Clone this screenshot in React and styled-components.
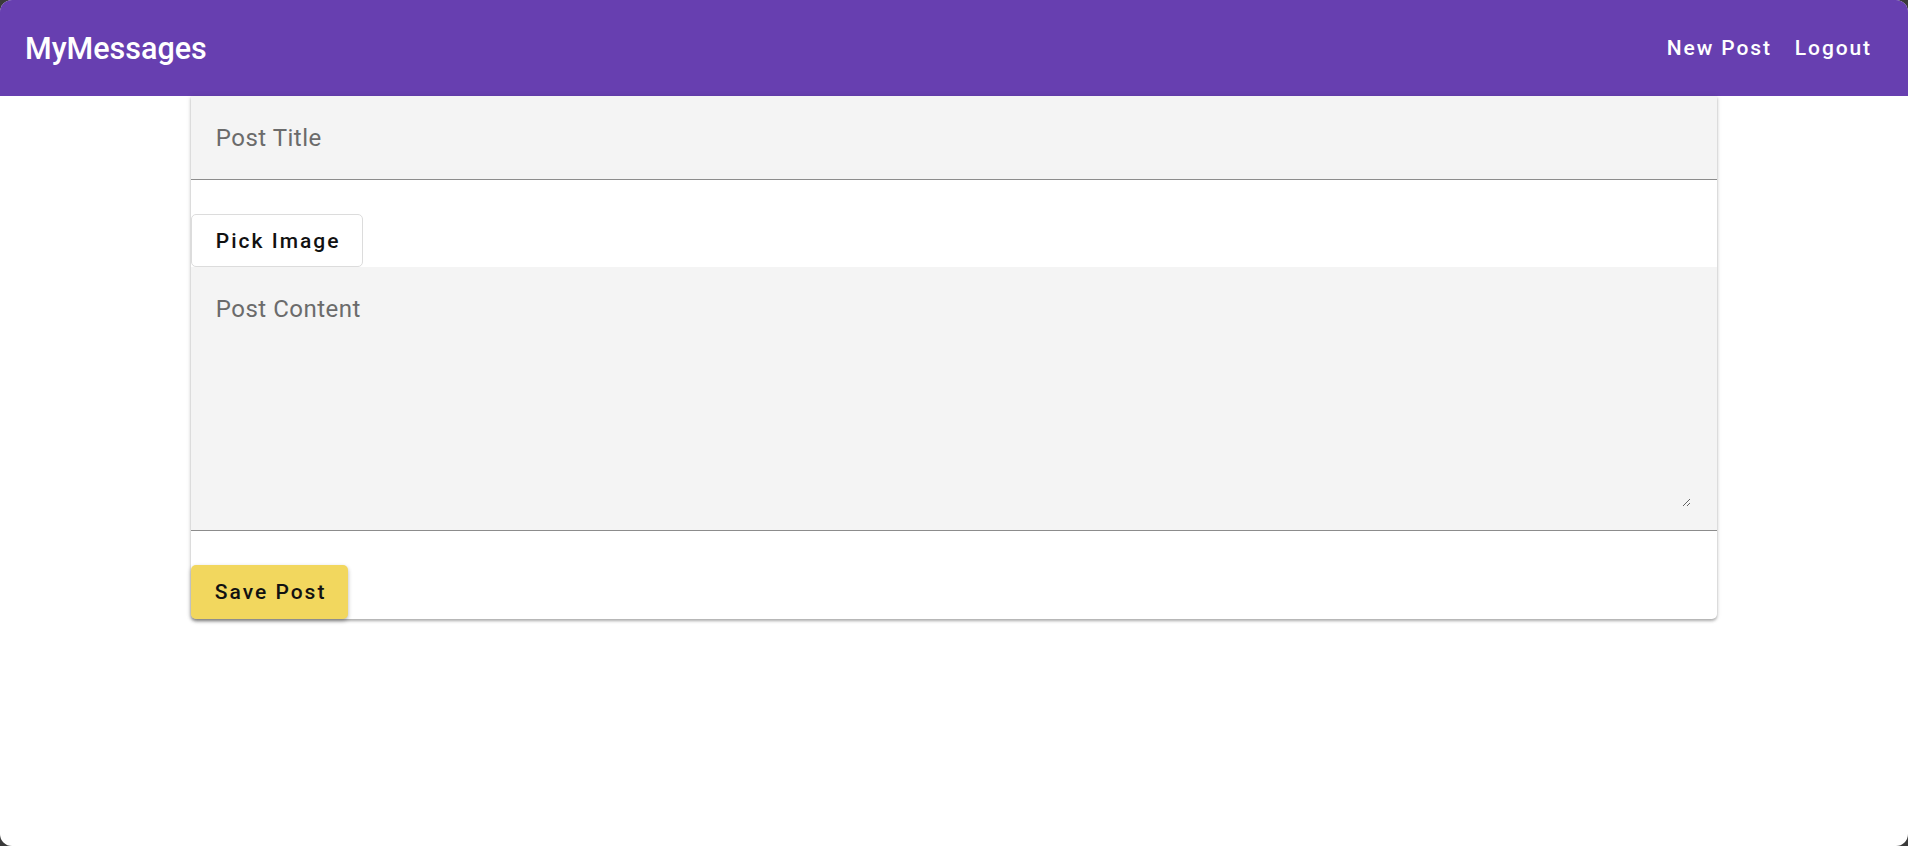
import React from "react";
import styled, { createGlobalStyle } from "styled-components";

const Global = createGlobalStyle`
  html, body { margin: 0; padding: 0; background: #3a3a3a; }
  body { font-family: Roboto, "Noto Sans", sans-serif; }
  * { box-sizing: border-box; }
`;

const Window = styled.div`
  height: 846px;
  background: #ffffff;
  border-radius: 12px;
  overflow: hidden;
`;

const Header = styled.header`
  height: 96px;
  background: #673fb0;
  display: flex;
  align-items: center;
  justify-content: space-between;
  padding: 0 24px 0 25px;
`;

const Logo = styled.div`
  color: #ffffff;
  font-size: 30.5px;
  font-weight: 500;
`;

const Nav = styled.nav`
  display: flex;
  gap: 23px;
  padding-right: 12px;
`;

const NavLink = styled.a`
  color: #ffffff;
  font-size: 21px;
  font-weight: 500;
  letter-spacing: 1.9px;
  text-decoration: none;
`;

const Card = styled.form`
  width: 80%;
  margin: 0 auto;
  display: flex;
  flex-direction: column;
  align-items: flex-start;
  border-radius: 0 0 5px 5px;
  box-shadow: 0 2px 3px rgba(0, 0, 0, 0.3), 0 0 6px rgba(0, 0, 0, 0.08);
`;

const TitleInput = styled.input`
  width: 100%;
  height: 84px;
  background: #f4f4f4;
  border: none;
  border-bottom: 1px solid #8c8c8c;
  padding: 0 25px;
  font-family: Roboto, sans-serif;
  font-size: 24px;
  letter-spacing: 0.5px;
  color: #333;
  outline: none;
  &::placeholder { color: #6b6b6b; }
`;

const Button = styled.button`
  height: ${(p) => p.$h || 53}px;
  padding: 0 22px 0 24px;
  margin-top: 34px;
  font-family: Roboto, sans-serif;
  font-size: 21px;
  font-weight: 500;
  letter-spacing: 2px;
  color: #111;
  border-radius: 5px;
  border: ${(p) => (p.$primary ? "none" : "1px solid #dcdcdc")};
  background: ${(p) => (p.$primary ? "#f2d75e" : "#ffffff")};
  box-shadow: ${(p) => (p.$primary ? "0 2px 4px rgba(0,0,0,0.3)" : "none")};
  cursor: pointer;
`;

const ContentWrap = styled.div`
  width: 100%;
  background: #f4f4f4;
  border-bottom: 1px solid #8c8c8c;
  padding: 28px 26px 23px 25px;
  display: flex;
`;

const ContentArea = styled.textarea`
  width: 100%;
  height: 212px;
  background: transparent;
  border: none;
  outline: none;
  padding: 0;
  resize: vertical;
  font-family: Roboto, sans-serif;
  font-size: 24px;
  letter-spacing: 0.5px;
  color: #333;
  &::placeholder { color: #6b6b6b; }
`;

export default function App() {
  return (
    <>
      <Global />
      <Window>
        <Header>
          <Logo>MyMessages</Logo>
          <Nav>
            <NavLink href="#">New Post</NavLink>
            <NavLink href="#">Logout</NavLink>
          </Nav>
        </Header>
        <Card onSubmit={(e) => e.preventDefault()}>
          <TitleInput placeholder="Post Title" />
          <Button type="button">Pick Image</Button>
          <ContentWrap>
            <ContentArea placeholder="Post Content" />
          </ContentWrap>
          <Button type="submit" $primary $h={54}>Save Post</Button>
        </Card>
      </Window>
    </>
  );
}
